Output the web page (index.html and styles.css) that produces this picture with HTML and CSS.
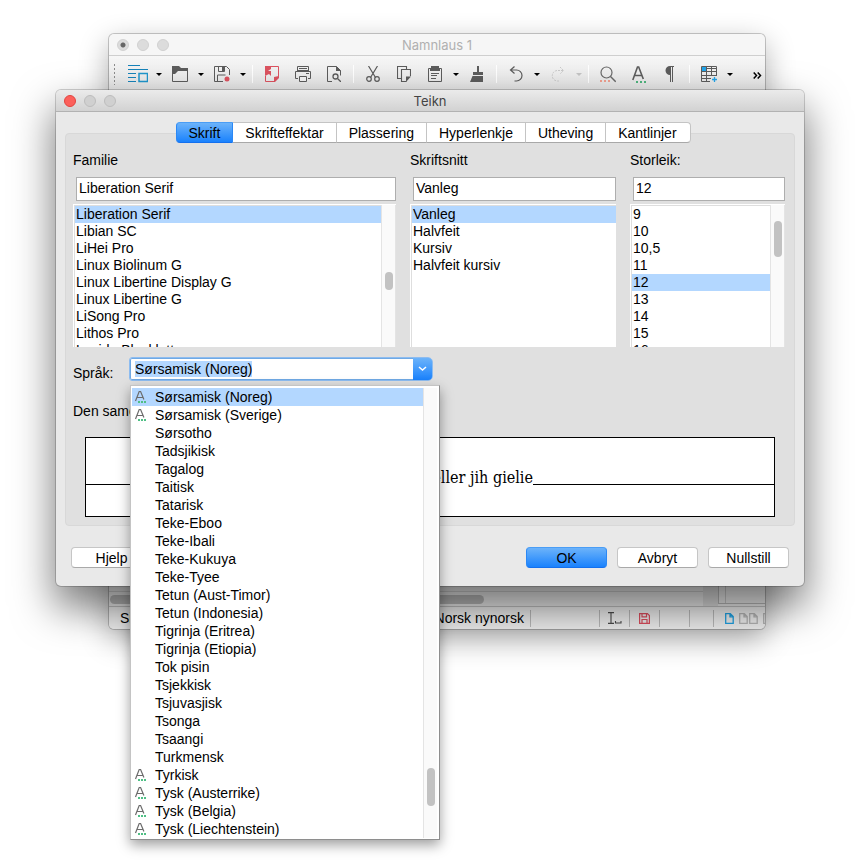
FILE: index.html
```html
<!DOCTYPE html>
<html lang="nn">
<head>
<meta charset="utf-8">
<title>Teikn</title>
<link rel="stylesheet" href="styles.css">
</head>
<body>
<svg class="defs" aria-hidden="true">
  <symbol id="spell" viewBox="0 0 14 14"><path d="M1.500 11 5.200 1.500h1.400l3.300 8M3 7.500h6" fill="none" stroke="#6b6b6b" stroke-width="1.200"/><path d="M4 11h2v2H4zM7 11h2v2H7zM10 11h2v2h-2z" fill="#4fbf85"/></symbol>
  <symbol id="page" viewBox="0 0 9 11"><path d="M.7.7h4.600l2.900 2.900v6.700H.7zM5 .7v3.200h3" fill="none" stroke="currentColor" stroke-width="1.300"/></symbol>
</svg>

<main class="desktop">
  <section class="window main-window" aria-label="Namnlaus 1">
    <header class="titlebar inactive">
      <div class="lights"><i class="dot"></i><i></i><i></i></div>
      <h1>Namnlaus 1</h1>
    </header>
    <div class="toolbar" role="toolbar">
      <span class="grip"></span>
      <button class="tool" aria-label="Stilar"><svg width="20" height="18" viewBox="0 0 20 18"><g fill="none" stroke="#1683ba"><path d="M0 .5h12M0 4.500h20M0 8.500h8M0 12.500h8M0 16.500h8"/><path d="M11 8.500h8.500v8H11z" stroke="#1f96cc" stroke-width="1.500"/></g></svg></button>
      <button class="arrow" aria-label="Fleire stilar"></button>
      <button class="tool" aria-label="Opna"><svg width="16" height="16" viewBox="0 0 16 16"><path d="M0 0h7l2 2h7v3H6L3 8H0z" fill="#5c5c5c"/><path d="M.5 2v13.500h15V3" fill="none" stroke="#5c5c5c"/></svg></button>
      <button class="arrow" aria-label="Nyleg opna"></button>
      <button class="tool" aria-label="Lagra"><svg width="16" height="16" viewBox="0 0 16 16"><path d="M9 15.500H.5V.5h12l3 3V9M4.500.5v5h6v-5M3.500 15V9h8" fill="none" stroke="#5c5c5c"/><path d="M8 1h2v4H8z" fill="#5c5c5c"/><circle cx="13" cy="13" r="2.500" fill="#dc5360"/></svg></button>
      <button class="arrow" aria-label="Lagra som"></button>
      <span class="sep"></span>
      <button class="tool" aria-label="Eksporter til PDF"><svg width="14" height="16" viewBox="0 0 14 16"><path d="M6 .5h7.500v10l-4.500 5H.5V10" fill="none" stroke="#dc5360"/><path d="M0 0h6v3L3 5h3v5L4 8 0 10zM14 10v2l-4 4H9v-5z" fill="#dc5360"/></svg></button>
      <button class="tool" aria-label="Skriv ut"><svg width="16" height="16" viewBox="0 0 16 16"><path d="M2.500 4.500v-4h11v4M4 2.500h8M3 12.500H.5v-7h15v7H13M11 7.500h3" fill="none" stroke="#5c5c5c"/><path d="M2 4h12v2H2z" fill="#5c5c5c"/><path d="M4.500 10.500h7v5h-7z" fill="#f4f4f4" stroke="#5c5c5c"/></svg></button>
      <button class="tool" aria-label="Førehandsvising"><svg width="14" height="16" viewBox="0 0 14 16"><path d="M5 15.500H.5V.5h9l4 4v5" fill="none" stroke="#5c5c5c"/><path d="M9 0l5 5H9z" fill="#5c5c5c"/><circle cx="8.500" cy="10.500" r="2.500" fill="none" stroke="#5c5c5c" stroke-width="1.300"/><path d="M10.500 12.500 14 16" stroke="#5c5c5c" stroke-width="1.300"/></svg></button>
      <span class="sep"></span>
      <button class="tool" aria-label="Klipp ut"><svg width="14" height="16" viewBox="0 0 14 16"><g fill="none" stroke="#5c5c5c" stroke-width="1.200"><path d="M2.500 0 9.500 11.500M11.500 0 4.500 11.500"/><circle cx="3" cy="13" r="2.300"/><circle cx="11" cy="13" r="2.300"/></g></svg></button>
      <button class="tool" aria-label="Kopier"><svg width="14" height="16" viewBox="0 0 14 16"><path d="M4 12.500H.5V.5h9V3M13.500 10V3.500h-9v12h5" fill="none" stroke="#5c5c5c" stroke-width="1.100"/><path d="M14 10.500H9V16z" fill="#5c5c5c"/></svg></button>
      <button class="tool" aria-label="Lim inn"><svg width="14" height="16" viewBox="0 0 14 16"><path d="M.5 2.500h13v13H.5zM3 7.500h8M3 9.500h6M3 12.500h5" fill="none" stroke="#5c5c5c"/><path d="M2 5V2h1V0h8v2h1v3z" fill="#5c5c5c"/></svg></button>
      <button class="arrow" aria-label="Lim inn utval"></button>
      <button class="tool" aria-label="Kopier formatering"><svg width="14" height="16" viewBox="0 0 14 16"><path d="M7 0h2v6h4v3H3V6h4zM2.500 10H13v6H0z" fill="#5c5c5c"/></svg></button>
      <span class="sep"></span>
      <button class="tool" aria-label="Angra"><svg width="14" height="16" viewBox="0 0 14 16"><path d="M5.500.5 1.500 4l4 3.500M2 4h5.500a5.500 5.500 0 0 1 0 11H5.500" fill="none" stroke="#5c5c5c" stroke-width="1.200"/></svg></button>
      <button class="arrow" aria-label="Angra fleire"></button>
      <button class="tool" aria-label="Gjer om" disabled><svg width="14" height="16" viewBox="0 0 14 16"><path d="M9 1l3.500 3.500L9 8M12 4.500H6.500A5 5 0 0 0 6.500 15H8" fill="none" stroke="#c9c9c9" stroke-dasharray="2 1"/></svg></button>
      <button class="arrow off" aria-label="Gjer om fleire" disabled></button>
      <span class="sep"></span>
      <button class="tool" aria-label="Finn"><svg width="16" height="17" viewBox="0 0 16 17"><circle cx="6.500" cy="6.500" r="5.500" fill="none" stroke="#6a6a6a" stroke-width="1.200"/><path d="m10.500 10.500 5.200 5.200" stroke="#6a6a6a" stroke-width="1.400"/><path d="M0 14h2v2H0zM4 14h2v2H4zM8 14h2v2H8z" fill="#f0a090"/></svg></button>
      <button class="tool" aria-label="Stavekontroll"><svg width="14" height="17" viewBox="0 0 14 17"><path d="M.8 14 5.500 1h1.200l4.600 12M2.500 9.500h7.200" fill="none" stroke="#5c5c5c" stroke-width="1.600"/><path d="M4 15h2v2H4zM8 15h2v2H8zM12 15h2v2h-2z" fill="#4fb57e"/></svg></button>
      <button class="tool" aria-label="Formateringsteikn"><svg width="9" height="16" viewBox="0 0 9 16"><path d="M9 0v1H8v15H7V1H6v15H5V9a4.500 4.500 0 0 1 0-9z" fill="#5c5c5c"/></svg></button>
      <span class="sep"></span>
      <button class="tool" aria-label="Tabell"><svg width="16" height="16" viewBox="0 0 16 16"><path d="M.5.500h15v9M9 15.500H.5V.5M0 5.500h16M0 9.500h16M0 12.500h10M5.500 0v16M10.500 0v10M5 2.500h11" fill="none" stroke="#5c5c5c"/><path d="M1 1h4v4H1z" fill="#21a4ea"/><path d="M13.500 11v5M11 13.500h5" stroke="#21a4ea" stroke-width="1.300"/></svg></button>
      <button class="arrow" aria-label="Tabellstorleik"></button>
      <button class="more" aria-label="Meir"><svg width="9" height="7" viewBox="0 0 9 7"><path d="M.7.5 3.500 3.500.7 6.500M4.700.5l2.800 3-2.800 3" fill="none" stroke="#000" stroke-width="1.500"/></svg></button>
    </div>
    <div class="document"></div>
    <div class="hscroll"><div class="track"><i></i></div><div class="rail"></div><div class="side"></div></div>
    <footer class="status">
      <span class="cell first">Side 1 av 1</span>
      <span class="cell lang">Norsk nynorsk</span>
      <span class="cell wide"></span>
      <span class="cell"><svg width="15" height="12" viewBox="0 0 15 12"><path d="M1 .6h6M4 .6v10.800M1 11.400h6M8.500 9v2h5.500V9" fill="none" stroke="#4a4a4a" stroke-width="1.100"/></svg></span>
      <span class="cell"><svg width="11" height="11" viewBox="0 0 11 11"><path d="M.6.6h7.800l2 2v7.800H.6zM3 .6v3.200h4.500V.6M3 10.400V6.500h5v3.900" fill="none" stroke="#d94d5c" stroke-width="1.200"/></svg></span>
      <span class="cell"></span>
      <span class="cell small"></span>
      <span class="cell pages"><svg class="blue" width="9" height="11"><use href="#page"/></svg><span class="pair"><svg width="9" height="11"><use href="#page"/></svg><svg width="9" height="11"><use href="#page"/></svg></span><svg width="9" height="11"><use href="#page"/></svg></span>
    </footer>
  </section>

  <section class="window dialog" role="dialog" aria-labelledby="dialog-title">
    <header class="titlebar">
      <div class="lights"><i class="close"></i><i></i><i></i></div>
      <h2 id="dialog-title">Teikn</h2>
    </header>
    <form class="content">
      <div class="tabs" role="tablist">
        <button type="button" role="tab" class="active" aria-selected="true">Skrift</button>
        <button type="button" role="tab">Skrifteffektar</button>
        <button type="button" role="tab">Plassering</button>
        <button type="button" role="tab">Hyperlenkje</button>
        <button type="button" role="tab">Utheving</button>
        <button type="button" role="tab">Kantlinjer</button>
      </div>
      <div class="panel" role="tabpanel">
        <div class="columns">
          <div class="column">
            <label for="family">Familie</label>
            <input id="family" value="Liberation Serif">
            <div class="list">
              <ul role="listbox" aria-label="Familie">
                <li role="option" class="selected" aria-selected="true">Liberation Serif</li>
                <li role="option">Libian SC</li>
                <li role="option">LiHei Pro</li>
                <li role="option">Linux Biolinum G</li>
                <li role="option">Linux Libertine Display G</li>
                <li role="option">Linux Libertine G</li>
                <li role="option">LiSong Pro</li>
                <li role="option">Lithos Pro</li>
                <li role="option">Lucida Blackletter</li>
              </ul>
              <div class="scroll family-scroll"><i></i></div>
            </div>
          </div>
          <div class="column">
            <label for="style">Skriftsnitt</label>
            <input id="style" value="Vanleg">
            <div class="list">
              <ul role="listbox" aria-label="Skriftsnitt">
                <li role="option" class="selected" aria-selected="true">Vanleg</li>
                <li role="option">Halvfeit</li>
                <li role="option">Kursiv</li>
                <li role="option">Halvfeit kursiv</li>
              </ul>
            </div>
          </div>
          <div class="column">
            <label for="size">Storleik:</label>
            <input id="size" value="12">
            <div class="list">
              <ul role="listbox" aria-label="Storleik">
                <li role="option">9</li>
                <li role="option">10</li>
                <li role="option">10,5</li>
                <li role="option">11</li>
                <li role="option" class="selected" aria-selected="true">12</li>
                <li role="option">13</li>
                <li role="option">14</li>
                <li role="option">15</li>
                <li role="option">16</li>
              </ul>
              <div class="scroll size-scroll"><i></i></div>
            </div>
          </div>
        </div>
        <div class="language">
          <label for="language">Språk:</label>
          <div class="combo">
            <input id="language" value="Sørsamisk (Noreg)" role="combobox" aria-expanded="true" aria-controls="languages">
            <button type="button" aria-label="Vis språk"><svg width="9" height="6" viewBox="0 0 9 6"><path d="m1 1 3.500 3L8 1" fill="none" stroke="#fff" stroke-width="1.500"/></svg></button>
            <div class="popup">
              <ul id="languages" role="listbox" aria-label="Språk">
                <li role="option" class="selected" aria-selected="true"><svg><use href="#spell"/></svg>Sørsamisk (Noreg)</li>
                <li role="option"><svg><use href="#spell"/></svg>Sørsamisk (Sverige)</li>
                <li role="option">Sørsotho</li>
                <li role="option">Tadsjikisk</li>
                <li role="option">Tagalog</li>
                <li role="option">Taitisk</li>
                <li role="option">Tatarisk</li>
                <li role="option">Teke-Eboo</li>
                <li role="option">Teke-Ibali</li>
                <li role="option">Teke-Kukuya</li>
                <li role="option">Teke-Tyee</li>
                <li role="option">Tetun (Aust-Timor)</li>
                <li role="option">Tetun (Indonesia)</li>
                <li role="option">Tigrinja (Eritrea)</li>
                <li role="option">Tigrinja (Etiopia)</li>
                <li role="option">Tok pisin</li>
                <li role="option">Tsjekkisk</li>
                <li role="option">Tsjuvasjisk</li>
                <li role="option">Tsonga</li>
                <li role="option">Tsaangi</li>
                <li role="option">Turkmensk</li>
                <li role="option"><svg><use href="#spell"/></svg>Tyrkisk</li>
                <li role="option"><svg><use href="#spell"/></svg>Tysk (Austerrike)</li>
                <li role="option"><svg><use href="#spell"/></svg>Tysk (Belgia)</li>
                <li role="option"><svg><use href="#spell"/></svg>Tysk (Liechtenstein)</li>
              </ul>
              <div class="scroll language-scroll"><i></i></div>
            </div>
          </div>
        </div>
        <p class="note">Den same skrifta vert brukt både på skrivaren og skjermen.</p>
        <div class="preview"><span>Gïele jallh gïe eller jih gielie</span></div>
      </div>
      <div class="actions">
        <button type="button" class="push">Hjelp</button>
        <span class="space"></span>
        <button type="button" class="push primary">OK</button>
        <button type="button" class="push">Avbryt</button>
        <button type="button" class="push">Nullstill</button>
      </div>
    </form>
  </section>
</main>
<script src="script.js"></script>
</body>
</html>
```
FILE: styles.css
```css
* { box-sizing: border-box; }
body {
  margin: 0;
  background: #fff;
  color: #000;
  font: 14px/18px "Liberation Sans", Arial, sans-serif;
}
button, input { font: inherit; color: inherit; margin: 0; }
button { padding: 0; border: 0; background: none; }
ul { list-style: none; margin: 0; padding: 0; }
h1, h2, p { margin: 0; }
::selection { background: #b3d7ff; color: #000; }
.defs { position: absolute; width: 0; height: 0; }
.desktop { position: relative; height: 100vh; min-height: 861px; overflow: hidden; }

.window { position: absolute; border-radius: 5px; }
.main-window {
  top: 34px; right: 95px; bottom: 232px; left: 109px;
  display: flex;
  flex-direction: column;
  overflow: hidden;
  background: #ececec;
  box-shadow: 0 0 0 1px rgba(0,0,0,.2), 0 10px 30px rgba(0,0,0,.33);
}
.dialog {
  top: 90px; right: 56px; left: 56px;
  background: #e9e9e9;
  box-shadow: 0 0 0 1px rgba(0,0,0,.18), 0 20px 40px 2px rgba(0,0,0,.52);
}

.titlebar {
  display: grid;
  grid-template-columns: 1fr auto 1fr;
  align-items: center;
  height: 22px;
  border-bottom: 1px solid #b2b2b2;
  border-radius: 5px 5px 0 0;
  background: linear-gradient(#ebebeb, #d2d2d2);
}
.titlebar.inactive { flex: none; background: #f6f6f6; border-color: #cfcfcf; }
.titlebar h1, .titlebar h2 { font: 13px/18px Inter, Roboto, sans-serif; color: #444; }
.titlebar.inactive h1 { color: #b0b0b0; }
.lights { display: flex; gap: 8px; padding-left: 8px; }
.lights i { width: 12px; height: 12px; border: 1px solid #bdbdbd; border-radius: 50%; background: #d0d0d0; }
.inactive .lights i { border-color: #d0d0d0; background: #dcdcdc; }
.lights .close { border-color: #e2443f; background: #fc605b; }
.inactive .lights .dot { background: radial-gradient(circle, #666 2px, #dcdcdc 3px); }

.toolbar {
  display: flex;
  flex: none;
  align-items: center;
  height: 36px;
  background: linear-gradient(#f7f7f7, #e5e5e5);
}
.grip { width: 13px; height: 22px; background: radial-gradient(circle, #8c8c8c 1px, transparent 1px) 4px 0 / 3px 4px repeat-y; }
.tool { display: flex; align-items: center; justify-content: center; width: 31px; height: 24px; }
.arrow { display: flex; justify-content: center; width: 11px; }
.arrow::before { content: ""; border: solid transparent; border-width: 3px 3px 0; border-top-color: #000; }
.arrow.off::before { border-top-color: #c4c4c4; }
.sep { display: flex; justify-content: center; width: 8px; height: 18px; }
.sep::before { content: ""; width: 1px; background: #fff; }
.more { margin-left: auto; padding-right: 3px; }
.document { flex: 1; }
.hscroll { display: flex; flex: none; height: 34px; border-bottom: 1px solid #c0c0c0; }
.track { flex: 1; display: flex; align-items: center; margin-top: 18px; border-top: 1px solid #cfcfcf; padding-left: 1px; }
.track i { width: 63%; height: 9px; border-radius: 5px; background: #b9b9b9; }
.rail { width: 15px; background: #dcdcdc; }
.side { width: 47px; margin-bottom: 2px; border: solid #b8b8b8; border-width: 0 0 1px 1px; }
.side::before { content: ""; display: block; width: 6px; height: 100%; border-right: 1px solid #c8c8c8; }
.status { display: flex; flex: none; align-items: center; height: 22px; background: #ececec; }
.cell { display: flex; align-items: center; justify-content: center; width: 30px; height: 17px; border-right: 1px solid #b8b8b8; white-space: nowrap; }
.cell.first { width: auto; padding-left: 11px; border: 0; }
.cell.lang { flex: 1; justify-content: flex-end; padding-right: 6px; }
.cell.wide { width: 69px; }
.cell.small { width: 24px; }
.cell.pages { width: 51px; justify-content: flex-start; gap: 5px; padding-left: 11px; border: 0; color: #b3b3b3; overflow: hidden; }
.cell.pages svg { flex: none; }
.pair { display: flex; gap: 1px; }
.blue { color: #1e9fe0; }

.content { padding: 10px 9px 18px; }
.tabs { position: relative; display: flex; justify-content: center; height: 21px; margin-bottom: -10px; padding-left: 7px; }
.tabs button {
  padding: 0 12px;
  border: solid #c4c4c4;
  border-width: 1px 1px 1px 0;
  border-bottom-color: #a8a8a8;
  background: #fff;
}
.tabs button.active { padding: 0 12px 0 11px; border-color: #4a9df5 #2b88f5 #1470ee; background: linear-gradient(#6cb3fa, #1a82fd); border-radius: 4px 0 0 4px; border-left-width: 1px; }
.tabs button:last-child { padding: 0 13px 0 12px; border-radius: 0 4px 4px 0; }
.panel { padding: 17px 9px 8px 7px; border: 1px solid #d8d8d8; border-radius: 4px; background: #e0e0e0; }
.columns { display: grid; grid-template-columns: 323fr 206fr 155fr; gap: 14px; }
.column { display: flex; flex-direction: column; min-width: 0; }
.column input { height: 24px; min-width: 0; margin: 8px 0 3px 3px; padding: 0 2px 2px; border: 1px solid #aeaeae; border-radius: 0; background: #fff; }
.list { display: flex; height: 143px; overflow: hidden; border: solid #fff; border-width: 1px 0 0 1px; background: #fff; }
.list ul { flex: 1; border: solid #dedede; border-width: 1px 0 0 1px; }
.list li { height: 17px; padding-left: 1px; line-height: 17px; }
.list .selected, .popup .selected { background: #b3d7ff; }
.scroll { display: flex; justify-content: center; width: 15px; border: 1px solid #e4e4e4; border-width: 0 1px; background: #fafafa; }
.scroll i { width: 8px; border-radius: 4px; background: #c2c2c2; }
.family-scroll i { height: 18px; margin-top: 67px; }
.size-scroll i { height: 36px; margin-top: 16px; }

.language { display: flex; margin-top: 10px; }
.language > label { width: 56px; padding-top: 7px; }
.combo { position: relative; display: flex; width: 304px; height: 24px; border: 1px solid #8dbcf0; border-radius: 3px 5px 5px 3px; background: #fff; box-shadow: inset 0 0 0 1px #6fa9e4; }
.combo input { flex: 1; min-width: 0; height: 22px; padding: 0 5px; border: 0; background: none; outline: 0; }
.combo > button { display: flex; align-items: center; justify-content: center; width: 19px; border-radius: 0 4px 4px 0; background: linear-gradient(#6cb3fa, #1a82fd); }
.popup {
  position: absolute; top: 27px; left: 0; z-index: 2;
  display: flex;
  width: 310px;
  padding: 2px 2px 1px 1px;
  border: 1px solid #8e8e8e;
  border-color: #c4c4c4 #8e8e8e #8e8e8e #c4c4c4;
  background: #fff;
  box-shadow: 0 5px 12px rgba(0,0,0,.38);
}
.popup ul { flex: 1; }
.popup li { position: relative; height: 18px; padding-left: 23px; }
.popup li svg { position: absolute; top: 2px; left: 2px; width: 14px; height: 14px; }
.popup .scroll { width: 14px; border-right: 0; }
.language-scroll i { height: 38px; margin-top: 380px; }
.note { margin-top: 20px; }
.preview { display: flex; height: 80px; margin: 17px 10px 0 12px; border: 1px solid #000; background: #fff; font: 16px/24px "DejaVu Serif Condensed", "DejaVu Serif", serif; white-space: nowrap; }
.preview::before, .preview::after { content: ""; flex: 1; height: 46px; border-bottom: 1px solid #000; }
.preview span { margin-top: 28px; }

.actions { display: flex; gap: 10px; margin-top: 21px; padding: 0 6px; }
.space { flex: 1; }
.push { width: 81px; height: 21px; border: 1px solid #c6c6c6; border-bottom-color: #a9a9a9; border-radius: 4px; background: #fff; }
.primary { border-color: #4a9df5 #2b88f5 #1470ee; background: linear-gradient(#6cb3fa, #1a82fd); }
```
FILE: script.js
```js
const language = document.getElementById("language");
language.focus();
language.select();
```
